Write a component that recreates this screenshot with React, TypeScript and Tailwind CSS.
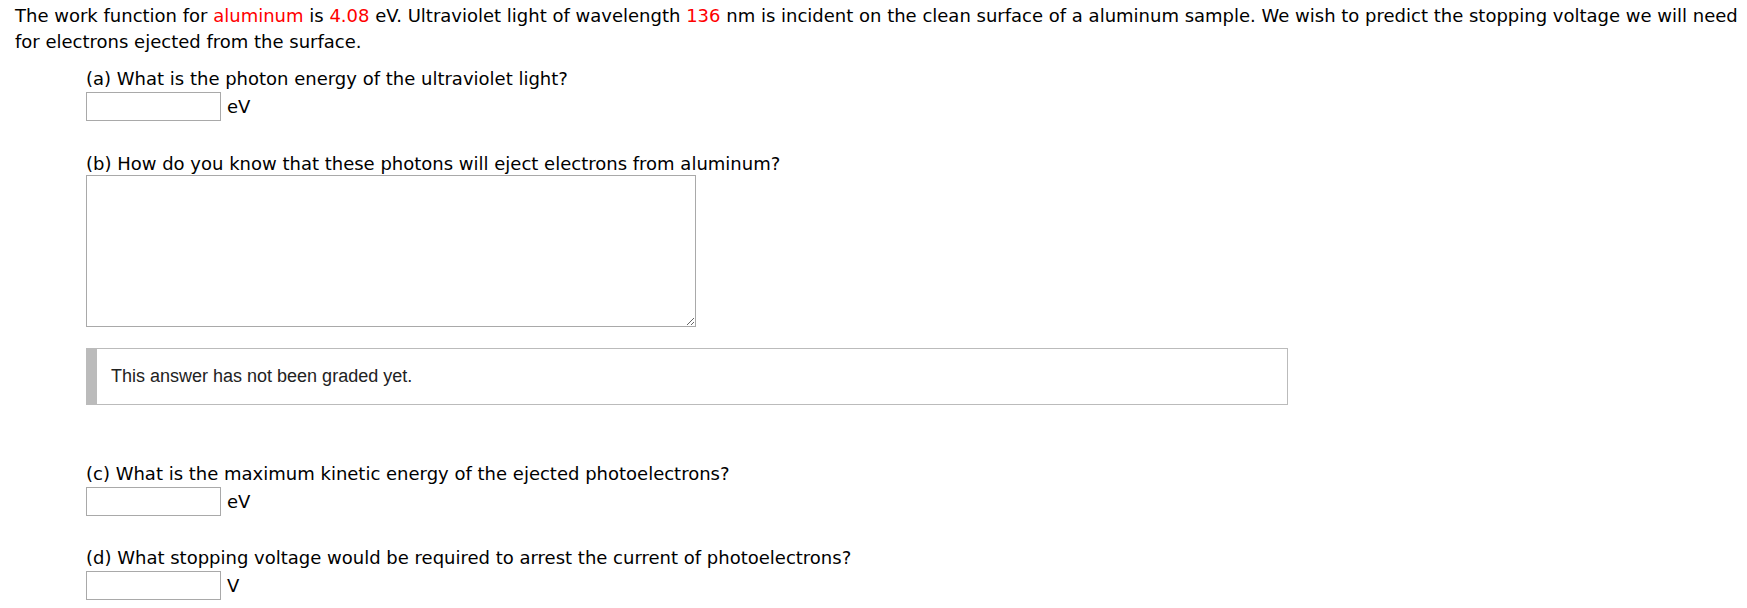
import React from "react";

function Label({ children, className = "" }: { children: React.ReactNode; className?: string }) {
  return <div className={`leading-[22px] ${className}`}>{children}</div>;
}

function UnitInput({ unit }: { unit: string }) {
  return (
    <div className="mt-[2px] flex items-center">
      <input
        type="text"
        className="box-border block h-[29px] w-[135px] border border-[#a9a9a9] bg-white outline-none"
      />
      <span className="ml-[6px] leading-[22px]">{unit}</span>
    </div>
  );
}

export default function App() {
  return (
    <div
      className="min-h-[608px] w-[1747px] bg-white text-[18px] text-black"
      style={{ fontFamily: '"DejaVu Sans", Verdana, sans-serif' }}
    >
      <div className="px-[15px] pt-[3px] leading-[26px] whitespace-nowrap">
        The work function for <span className="text-[#ff0000]">aluminum</span> is{" "}
        <span className="text-[#ff0000]">4.08</span> eV. Ultraviolet light of wavelength{" "}
        <span className="text-[#ff0000]">136</span> nm is incident on the clean surface of a aluminum sample.
        We wish to predict the stopping voltage we will need
        <br />
        for electrons ejected from the surface.
      </div>

      <div className="ml-[86px]">
        <Label className="mt-[13px]">(a) What is the photon energy of the ultraviolet light?</Label>
        <UnitInput unit="eV" />

        <Label className="mt-[32px]">(b) How do you know that these photons will eject electrons from aluminum?</Label>
        <textarea className="box-border block h-[152px] w-[610px] border border-[#a9a9a9] bg-white outline-none" />

        <div
          className="mt-[21px] box-border flex h-[57px] w-[1202px] items-center border border-l-[11px] border-[#bbbbbb] pl-[14px] text-[18px] text-[#222]"
          style={{ fontFamily: '"Liberation Sans", Arial, sans-serif' }}
        >
          This answer has not been graded yet.
        </div>

        <Label className="mt-[58px]">(c) What is the maximum kinetic energy of the ejected photoelectrons?</Label>
        <UnitInput unit="eV" />

        <Label className="mt-[31px]">(d) What stopping voltage would be required to arrest the current of photoelectrons?</Label>
        <UnitInput unit="V" />
      </div>
    </div>
  );
}
